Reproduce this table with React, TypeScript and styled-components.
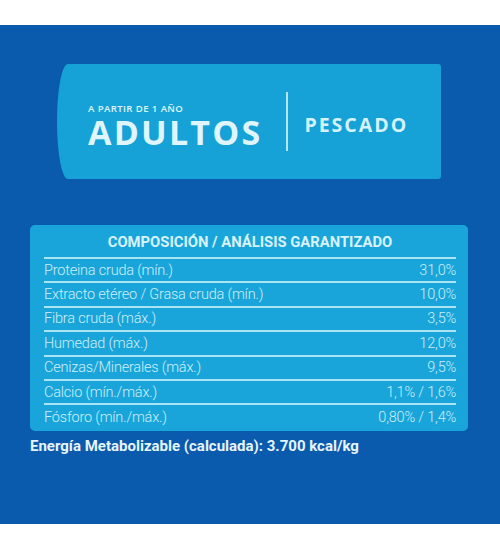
import React from "react";
import styled, { createGlobalStyle } from "styled-components";

const Global = createGlobalStyle`
  html, body { margin: 0; padding: 0; background: #ffffff; }
  body { width: 500px; height: 552px; overflow: hidden; }
`;

const Page = styled.div`
  padding-top: 25px;
`;

const Panel = styled.section`
  height: 499px;
  box-sizing: border-box;
  background: #0a5aae;
  padding: 39px 32px 0 30px;
  display: flex;
  flex-direction: column;
`;

const Banner = styled.div`
  margin-left: 27px;
  width: 384px;
  height: 115px;
  box-sizing: border-box;
  background: #17a2d7;
  border-radius: 11px 3px 3px 11px / 57px 3px 3px 57px;
  display: flex;
  align-items: center;
  padding-left: 31px;
  padding-top: 6px;
`;

const AgeBlock = styled.div`
  display: flex;
  flex-direction: column;
  gap: 5px;
  font-family: "Open Sans", sans-serif;
  color: #dff5fb;
`;

const AgeLabel = styled.span`
  font-size: 9.6px;
  font-weight: 600;
  letter-spacing: 0.4px;
  line-height: 10px;
`;

const Stage = styled.span`
  font-size: 34px;
  font-weight: 700;
  letter-spacing: 2.2px;
  line-height: 27px;
`;

const Divider = styled.div`
  width: 2px;
  height: 59px;
  background: #b6e6f4;
  margin: -6px 16px 0 24px;
`;

const Flavor = styled.span`
  font-family: "Open Sans", sans-serif;
  font-size: 19.5px;
  font-weight: 700;
  letter-spacing: 2px;
  color: #d6f2fa;
`;

const Table = styled.div`
  margin-top: 46px;
  width: 438px;
  height: 206px;
  box-sizing: border-box;
  background: #1aa5da;
  border-radius: 5px;
  padding: 0 12px 0 14px;
  display: flex;
  flex-direction: column;
  font-family: "Roboto", sans-serif;
`;

const Title = styled.div`
  height: 34px;
  box-sizing: border-box;
  border-bottom: 2px solid #a9e3f4;
  display: flex;
  align-items: center;
  justify-content: center;
  padding-top: 2px;
  font-size: 14.8px;
  font-weight: 700;
  font-stretch: 88%;
  letter-spacing: 0px;
  color: #d8f3fb;
`;

const Row = styled.div<{ $last?: boolean }>`
  height: 24.4px;
  box-sizing: border-box;
  display: flex;
  align-items: center;
  justify-content: space-between;
  border-bottom: ${(p) => (p.$last ? "none" : "2px solid #a9e3f4")};
  font-size: 14.5px;
  font-weight: 350;
  font-stretch: 88%;
  letter-spacing: -0.2px;
  color: #cdeff9;
`;

const Energy = styled.div`
  margin-top: 6px;
  font-family: "Roboto", sans-serif;
  font-stretch: 88%;
  font-size: 15px;
  font-weight: 700;
  letter-spacing: 0px;
  color: #e6f5fb;
`;

const rows: [string, string][] = [
  ["Proteina cruda (mín.)", "31,0%"],
  ["Extracto etéreo / Grasa cruda (mín.)", "10,0%"],
  ["Fibra cruda (máx.)", "3,5%"],
  ["Humedad (máx.)", "12,0%"],
  ["Cenizas/Minerales (máx.)", "9,5%"],
  ["Calcio (mín./máx.)", "1,1% / 1,6%"],
  ["Fósforo (mín./máx.)", "0,80% / 1,4%"],
];

export default function App() {
  return (
    <Page>
      <Global />
      <Panel>
        <Banner>
          <AgeBlock>
            <AgeLabel>A PARTIR DE 1 AÑO</AgeLabel>
            <Stage>ADULTOS</Stage>
          </AgeBlock>
          <Divider />
          <Flavor>PESCADO</Flavor>
        </Banner>
        <Table>
          <Title>COMPOSICIÓN / ANÁLISIS GARANTIZADO</Title>
          {rows.map(([k, v], i) => (
            <Row key={k} $last={i === rows.length - 1}>
              <span>{k}</span>
              <span>{v}</span>
            </Row>
          ))}
        </Table>
        <Energy>Energía Metabolizable (calculada): 3.700 kcal/kg</Energy>
      </Panel>
    </Page>
  );
}
